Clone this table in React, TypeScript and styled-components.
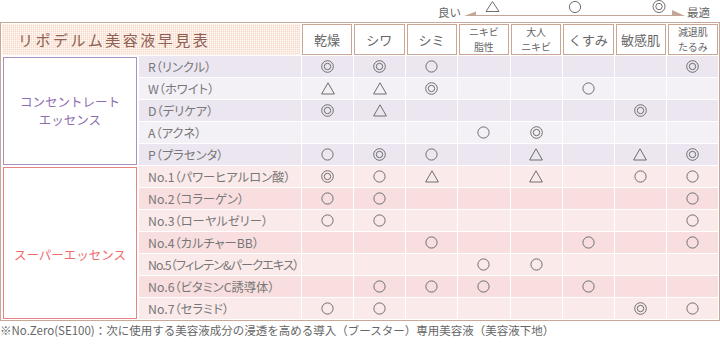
import React from "react";
import styled, { createGlobalStyle } from "styled-components";

const GlobalStyle = createGlobalStyle`
  html, body { margin: 0; padding: 0; background: #fff; }
  body { font-family: "Noto Sans CJK JP", "Noto Sans", sans-serif; color: #666; }
`;

const Page = styled.div`
  width: 720px;
  height: 347px;
  overflow: hidden;
`;

const Legend = styled.div`
  height: 22px;
  display: flex;
  align-items: flex-start;
  padding-left: 438px;
`;

const LegendText = styled.span<{ $end?: boolean }>`
  font-size: 11.5px;
  line-height: 14px;
  padding-top: 5px;
  color: #666;
  margin: ${(p) => (p.$end ? "0 0 0 1px" : "0 3px 0 0")};
`;

const Table = styled.div`
  width: 720px;
  box-sizing: border-box;
  border: 1px solid #c8a898;
  padding: 1px;
  background: #fff;
`;

const HeaderRow = styled.div`
  display: grid;
  grid-template-columns: 298px repeat(8, 1fr);
  column-gap: 2px;
  height: 31px;
  margin-bottom: 1px;
`;

const TitleCell = styled.div`
  display: flex;
  align-items: center;
  padding-left: 16px;
  font-size: 15px;
  letter-spacing: 2.5px;
  color: #8d5f55;
  background-color: #f8d6c4;
  background-image: linear-gradient(90deg, rgba(255, 255, 255, 0.55) 1px, transparent 1px),
    linear-gradient(rgba(255, 255, 255, 0.55) 1px, transparent 1px);
  background-size: 2px 2px;
`;

const HeadCell = styled.div`
  box-sizing: border-box;
  border: 1px solid #c9a696;
  display: flex;
  flex-direction: column;
  align-items: center;
  justify-content: center;
  text-align: center;
  color: #666;
  font-size: 13px;
  line-height: 15px;
`;

const HeadLine = styled.span`
  display: block;
  font-size: 10px;
  line-height: 14.5px;
  height: 14.5px;
`;

const Body = styled.div`
  display: grid;
  grid-template-columns: 136px 162px repeat(8, 1fr);
  grid-auto-rows: 21px;
  gap: 1px;
`;

const GroupCell = styled.div<{ $span: number; $tone: "purple" | "red"; $shift?: number }>`
  grid-column: 1;
  grid-row: span ${(p) => p.$span};
  margin: 1px 1px 0 1px;
  border: 1px solid ${(p) => (p.$tone === "purple" ? "#a892c5" : "#e98383")};
  background: #fff;
  display: flex;
  align-items: center;
  justify-content: center;
  text-align: center;
  padding-top: ${(p) => p.$shift ?? 0}px;
  font-size: 12.5px;
  line-height: 18.5px;
  color: ${(p) => (p.$tone === "purple" ? "#8c6db1" : "#f06a6a")};
`;

const rowBg = {
  purpleDark: "#ece6f1",
  purpleLight: "#f3f0f6",
  redLight: "#fbeaea",
  redDark: "#f8dede",
};

type Tone = keyof typeof rowBg;

const NameCell = styled.div<{ $bg: Tone; $tight?: boolean }>`
  grid-column: 2;
  background: ${(p) => rowBg[p.$bg]};
  display: flex;
  align-items: center;
  padding-left: 9px;
  font-size: 12.3px;
  letter-spacing: ${(p) => (p.$tight ? "-1px" : "0")};
  font-feature-settings: "palt";
  color: #777;
  white-space: nowrap;
  overflow: hidden;
`;

const MarkCell = styled.div<{ $bg: Tone }>`
  background: ${(p) => rowBg[p.$bg]};
  display: flex;
  align-items: center;
  justify-content: center;
`;

const Footer = styled.div`
  padding-top: 2px;
  font-size: 11.5px;
  line-height: 15px;
  color: #666;
  white-space: nowrap;
`;

const SymbolSvg = styled.svg`
  display: block;
  overflow: visible;
`;

type Mark = "W" | "O" | "T" | "";

const Symbol: React.FC<{ m: Mark }> = ({ m }) => {
  if (m === "O")
    return (
      <SymbolSvg width="13" height="13" viewBox="0 0 13 13">
        <circle cx="6.5" cy="6.5" r="5.6" fill="none" stroke="#6e6e6e" strokeWidth="1" />
      </SymbolSvg>
    );
  if (m === "W")
    return (
      <SymbolSvg width="13" height="13" viewBox="0 0 13 13">
        <circle cx="6.5" cy="6.5" r="5.8" fill="none" stroke="#6e6e6e" strokeWidth="1" />
        <circle cx="6.5" cy="6.5" r="3.2" fill="none" stroke="#6e6e6e" strokeWidth="1" />
      </SymbolSvg>
    );
  if (m === "T")
    return (
      <SymbolSvg width="14" height="13" viewBox="0 0 14 13">
        <polygon points="7,0.8 13.4,12 0.6,12" fill="none" stroke="#6e6e6e" strokeWidth="1" />
      </SymbolSvg>
    );
  return null;
};

const Scale: React.FC = () => (
  <SymbolSvg width="222" height="20" viewBox="0 0 222 20">
    <polygon points="0,16 12,11.5 12,16" fill="#c2a697" />
    <rect x="12" y="15" width="196" height="1" fill="#c2a697" />
    <polygon points="208,10 221,16 208,16" fill="#c2a697" />
    <polygon points="28.5,1.5 35,11.5 22,11.5" fill="none" stroke="#6e6e6e" strokeWidth="1" />
    <circle cx="111" cy="7" r="5.6" fill="none" stroke="#6e6e6e" strokeWidth="1" />
    <circle cx="195" cy="6.5" r="6" fill="none" stroke="#6e6e6e" strokeWidth="1" />
    <circle cx="195" cy="6.5" r="3.2" fill="none" stroke="#6e6e6e" strokeWidth="1" />
  </SymbolSvg>
);

const columns: string[][] = [
  ["乾燥"],
  ["シワ"],
  ["シミ"],
  ["ニキビ", "脂性"],
  ["大人", "ニキビ"],
  ["くすみ"],
  ["敏感肌"],
  ["減退肌", "たるみ"],
];

type Row = { name: string; marks: Mark[]; tight?: boolean };

const concentrate: Row[] = [
  { name: "R（リンクル）", marks: ["W", "W", "O", "", "", "", "", "W"] },
  { name: "W（ホワイト）", marks: ["T", "T", "W", "", "", "O", "", ""] },
  { name: "D（デリケア）", marks: ["W", "T", "", "", "", "", "W", ""] },
  { name: "A（アクネ）", marks: ["", "", "", "O", "W", "", "", ""] },
  { name: "P（プラセンタ）", marks: ["O", "W", "O", "", "T", "", "T", "W"] },
];

const superRows: Row[] = [
  { name: "No.1（パワーヒアルロン酸）", marks: ["W", "O", "T", "", "T", "", "O", "O"] },
  { name: "No.2（コラーゲン）", marks: ["O", "O", "", "", "", "", "", "O"] },
  { name: "No.3（ローヤルゼリー）", marks: ["O", "O", "", "", "", "", "", "O"] },
  { name: "No.4（カルチャーBB）", marks: ["", "", "O", "", "", "O", "", "O"] },
  { name: "No.5（フィレテン&パークエキス）", marks: ["", "", "", "O", "O", "", "", ""], tight: true },
  { name: "No.6（ビタミンC誘導体）", marks: ["", "O", "O", "O", "", "O", "", ""] },
  { name: "No.7（セラミド）", marks: ["O", "O", "", "", "", "", "W", "O"] },
];

const renderRows = (rows: Row[], tones: [Tone, Tone], prefix: string) =>
  rows.map((r, i) => {
    const bg = tones[i % 2];
    return (
      <React.Fragment key={prefix + i}>
        <NameCell $bg={bg} $tight={r.tight}>{r.name}</NameCell>
        {r.marks.map((m, j) => (
          <MarkCell key={j} $bg={bg}>
            <Symbol m={m} />
          </MarkCell>
        ))}
      </React.Fragment>
    );
  });

export default function App() {
  return (
    <Page>
      <GlobalStyle />
      <Legend>
        <LegendText>良い</LegendText>
        <Scale />
        <LegendText $end>最適</LegendText>
      </Legend>
      <Table>
        <HeaderRow>
          <TitleCell>リポデルム美容液早見表</TitleCell>
          {columns.map((c, i) => (
            <HeadCell key={i}>
              {c.length === 1 ? c[0] : c.map((l, k) => <HeadLine key={k}>{l}</HeadLine>)}
            </HeadCell>
          ))}
        </HeaderRow>
        <Body>
          <GroupCell $span={5} $tone="purple">
            コンセントレート
            <br />
            エッセンス
          </GroupCell>
          {renderRows(concentrate, ["purpleDark", "purpleLight"], "c")}
          <GroupCell $span={7} $tone="red" $shift={24}>
            スーパーエッセンス
          </GroupCell>
          {renderRows(superRows, ["redLight", "redDark"], "s")}
        </Body>
      </Table>
      <Footer>※No.Zero(SE100)：次に使用する美容液成分の浸透を高める導入（ブースター）専用美容液（美容液下地）</Footer>
    </Page>
  );
}
